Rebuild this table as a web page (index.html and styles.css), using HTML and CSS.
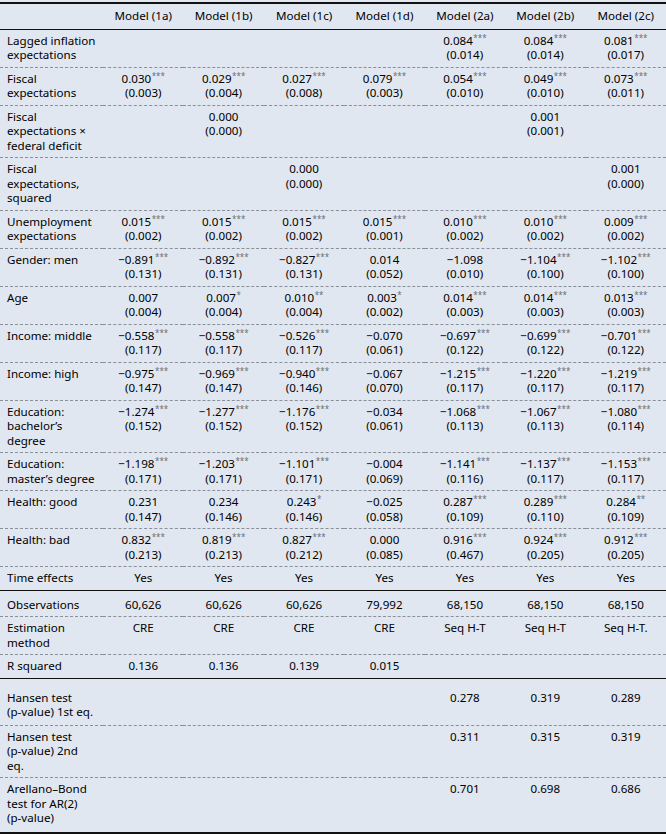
FILE: index.html
```html
<!DOCTYPE html>
<html lang="en">
<head>
<meta charset="utf-8">
<title>Regression results</title>
<link rel="stylesheet" href="styles.css">
</head>
<body>
<table class="results">
  <colgroup>
    <col class="c-label">
    <col class="c-val"><col class="c-val"><col class="c-val"><col class="c-val">
    <col class="c-val"><col class="c-val"><col class="c-val">
  </colgroup>
  <thead>
    <tr class="head">
      <th class="lab"></th>
      <th>Model (1a)</th><th>Model (1b)</th><th>Model (1c)</th><th>Model (1d)</th>
      <th>Model (2a)</th><th>Model (2b)</th><th>Model (2c)</th>
    </tr>
  </thead>
  <tbody>
    <tr>
      <td class="lab">Lagged inflation<br>expectations</td>
      <td></td><td></td><td></td><td></td>
      <td>0.084<sup>***</sup><br>(0.014)</td>
      <td>0.084<sup>***</sup><br>(0.014)</td>
      <td>0.081<sup>***</sup><br>(0.017)</td>
    </tr>
    <tr>
      <td class="lab">Fiscal<br>expectations</td>
      <td>0.030<sup>***</sup><br>(0.003)</td>
      <td>0.029<sup>***</sup><br>(0.004)</td>
      <td>0.027<sup>***</sup><br>(0.008)</td>
      <td>0.079<sup>***</sup><br>(0.003)</td>
      <td>0.054<sup>***</sup><br>(0.010)</td>
      <td>0.049<sup>***</sup><br>(0.010)</td>
      <td>0.073<sup>***</sup><br>(0.011)</td>
    </tr>
    <tr>
      <td class="lab">Fiscal<br>expectations ×<br>federal deficit</td>
      <td></td>
      <td>0.000<br>(0.000)</td>
      <td></td><td></td><td></td>
      <td>0.001<br>(0.001)</td>
      <td></td>
    </tr>
    <tr>
      <td class="lab">Fiscal<br>expectations,<br>squared</td>
      <td></td><td></td>
      <td>0.000<br>(0.000)</td>
      <td></td><td></td><td></td>
      <td>0.001<br>(0.000)</td>
    </tr>
    <tr>
      <td class="lab">Unemployment<br>expectations</td>
      <td>0.015<sup>***</sup><br>(0.002)</td>
      <td>0.015<sup>***</sup><br>(0.002)</td>
      <td>0.015<sup>***</sup><br>(0.002)</td>
      <td>0.015<sup>***</sup><br>(0.001)</td>
      <td>0.010<sup>***</sup><br>(0.002)</td>
      <td>0.010<sup>***</sup><br>(0.002)</td>
      <td>0.009<sup>***</sup><br>(0.002)</td>
    </tr>
    <tr>
      <td class="lab">Gender: men</td>
      <td>−0.891<sup>***</sup><br>(0.131)</td>
      <td>−0.892<sup>***</sup><br>(0.131)</td>
      <td>−0.827<sup>***</sup><br>(0.131)</td>
      <td>0.014<br>(0.052)</td>
      <td>−1.098<br>(0.010)</td>
      <td>−1.104<sup>***</sup><br>(0.100)</td>
      <td>−1.102<sup>***</sup><br>(0.100)</td>
    </tr>
    <tr>
      <td class="lab">Age</td>
      <td>0.007<br>(0.004)</td>
      <td>0.007<sup>*</sup><br>(0.004)</td>
      <td>0.010<sup>**</sup><br>(0.004)</td>
      <td>0.003<sup>*</sup><br>(0.002)</td>
      <td>0.014<sup>***</sup><br>(0.003)</td>
      <td>0.014<sup>***</sup><br>(0.003)</td>
      <td>0.013<sup>***</sup><br>(0.003)</td>
    </tr>
    <tr>
      <td class="lab">Income: middle</td>
      <td>−0.558<sup>***</sup><br>(0.117)</td>
      <td>−0.558<sup>***</sup><br>(0.117)</td>
      <td>−0.526<sup>***</sup><br>(0.117)</td>
      <td>−0.070<br>(0.061)</td>
      <td>−0.697<sup>***</sup><br>(0.122)</td>
      <td>−0.699<sup>***</sup><br>(0.122)</td>
      <td>−0.701<sup>***</sup><br>(0.122)</td>
    </tr>
    <tr>
      <td class="lab">Income: high</td>
      <td>−0.975<sup>***</sup><br>(0.147)</td>
      <td>−0.969<sup>***</sup><br>(0.147)</td>
      <td>−0.940<sup>***</sup><br>(0.146)</td>
      <td>−0.067<br>(0.070)</td>
      <td>−1.215<sup>***</sup><br>(0.117)</td>
      <td>−1.220<sup>***</sup><br>(0.117)</td>
      <td>−1.219<sup>***</sup><br>(0.117)</td>
    </tr>
    <tr>
      <td class="lab">Education:<br>bachelor’s<br>degree</td>
      <td>−1.274<sup>***</sup><br>(0.152)</td>
      <td>−1.277<sup>***</sup><br>(0.152)</td>
      <td>−1.176<sup>***</sup><br>(0.152)</td>
      <td>−0.034<br>(0.061)</td>
      <td>−1.068<sup>***</sup><br>(0.113)</td>
      <td>−1.067<sup>***</sup><br>(0.113)</td>
      <td>−1.080<sup>***</sup><br>(0.114)</td>
    </tr>
    <tr>
      <td class="lab">Education:<br>master’s degree</td>
      <td>−1.198<sup>***</sup><br>(0.171)</td>
      <td>−1.203<sup>***</sup><br>(0.171)</td>
      <td>−1.101<sup>***</sup><br>(0.171)</td>
      <td>−0.004<br>(0.069)</td>
      <td>−1.141<sup>***</sup><br>(0.116)</td>
      <td>−1.137<sup>***</sup><br>(0.117)</td>
      <td>−1.153<sup>***</sup><br>(0.117)</td>
    </tr>
    <tr>
      <td class="lab">Health: good</td>
      <td>0.231<br>(0.147)</td>
      <td>0.234<br>(0.146)</td>
      <td>0.243<sup>*</sup><br>(0.146)</td>
      <td>−0.025<br>(0.058)</td>
      <td>0.287<sup>***</sup><br>(0.109)</td>
      <td>0.289<sup>***</sup><br>(0.110)</td>
      <td>0.284<sup>**</sup><br>(0.109)</td>
    </tr>
    <tr>
      <td class="lab">Health: bad</td>
      <td>0.832<sup>***</sup><br>(0.213)</td>
      <td>0.819<sup>***</sup><br>(0.213)</td>
      <td>0.827<sup>***</sup><br>(0.212)</td>
      <td>0.000<br>(0.085)</td>
      <td>0.916<sup>***</sup><br>(0.467)</td>
      <td>0.924<sup>***</sup><br>(0.205)</td>
      <td>0.912<sup>***</sup><br>(0.205)</td>
    </tr>
    <tr class="solid">
      <td class="lab">Time effects</td>
      <td>Yes</td><td>Yes</td><td>Yes</td><td>Yes</td><td>Yes</td><td>Yes</td><td>Yes</td>
    </tr>
    <tr class="after-solid">
      <td class="lab">Observations</td>
      <td>60,626</td><td>60,626</td><td>60,626</td><td>79,992</td>
      <td>68,150</td><td>68,150</td><td>68,150</td>
    </tr>
    <tr>
      <td class="lab">Estimation<br>method</td>
      <td>CRE</td><td>CRE</td><td>CRE</td><td>CRE</td>
      <td>Seq H-T</td><td>Seq H-T</td><td>Seq H-T.</td>
    </tr>
    <tr class="solid">
      <td class="lab">R squared</td>
      <td>0.136</td><td>0.136</td><td>0.139</td><td>0.015</td>
      <td></td><td></td><td></td>
    </tr>
    <tr class="after-solid tests">
      <td class="lab">Hansen test<br>(p-value) 1st eq.</td>
      <td></td><td></td><td></td><td></td>
      <td>0.278</td><td>0.319</td><td>0.289</td>
    </tr>
    <tr>
      <td class="lab">Hansen test<br>(p-value) 2nd<br>eq.</td>
      <td></td><td></td><td></td><td></td>
      <td>0.311</td><td>0.315</td><td>0.319</td>
    </tr>
    <tr class="last">
      <td class="lab">Arellano–Bond<br>test for AR(2)<br>(p-value)</td>
      <td></td><td></td><td></td><td></td>
      <td>0.701</td><td>0.698</td><td>0.686</td>
    </tr>
  </tbody>
</table>
</body>
</html>
```

FILE: styles.css
```css
html, body {
  margin: 0;
  padding: 0;
  background: #e1e7f0;
}

body {
  padding-top: 2px;
}

.results {
  width: 666px;
  table-layout: fixed;
  border-collapse: collapse;
  font-family: "Noto Sans", "Open Sans", sans-serif;
  font-size: 11.6px;
  line-height: 14.5px;
  color: #000;
  border-top: 2px solid #111;
  border-bottom: 2px solid #111;
}

.c-label {
  width: 103px;
}

.results th,
.results td {
  padding: 4px 2px 4px 2px;
  text-align: center;
  vertical-align: top;
  white-space: nowrap;
  font-weight: normal;
}

.results th.lab,
.results td.lab {
  text-align: left;
  padding-left: 7px;
}

.head th {
  padding-top: 5px;
  padding-bottom: 5px;
  border-bottom: 1px solid #111;
}

.results tbody tr {
  border-bottom: 1px dashed #8a9099;
}

.results tbody tr.solid {
  border-bottom: 1.5px solid #111;
}

.results tbody tr.after-solid td {
  padding-top: 7px;
}

.results tbody tr.tests td {
  padding-top: 12px;
  padding-bottom: 5px;
}

.results tbody tr.last {
  border-bottom: 2px solid #111;
}

.results tbody tr.last td {
  padding-bottom: 6px;
}

sup {
  font-size: 8px;
  line-height: 0;
  vertical-align: 4px;
  color: #6a6f77;
  margin-left: 0.5px;
}
```
